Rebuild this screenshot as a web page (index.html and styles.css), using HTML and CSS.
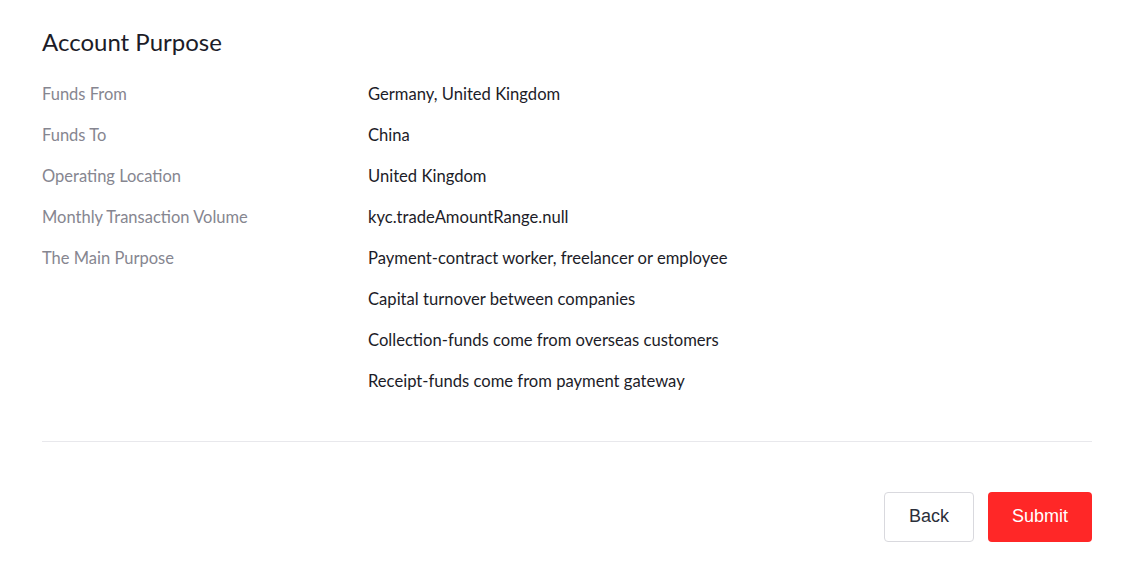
FILE: index.html
```html
<!DOCTYPE html>
<html lang="en">
<head>
    <meta charset="UTF-8">
    <meta name="viewport" content="width=device-width, initial-scale=1.0">
    <title>Account Purpose</title>
    <link rel="stylesheet" href="styles.css">
</head>
<body>
    <div class="pagina">
        <h2 class="titulo">Account Purpose</h2>

        <div class="detalles">
            <div class="fila">
                <div class="etiqueta">Funds From</div>
                <div class="valor">Germany, United Kingdom</div>
            </div>
            <div class="fila">
                <div class="etiqueta">Funds To</div>
                <div class="valor">China</div>
            </div>
            <div class="fila">
                <div class="etiqueta">Operating Location</div>
                <div class="valor">United Kingdom</div>
            </div>
            <div class="fila">
                <div class="etiqueta">Monthly Transaction Volume</div>
                <div class="valor">kyc.tradeAmountRange.null</div>
            </div>
            <div class="fila">
                <div class="etiqueta">The Main Purpose</div>
                <div class="valor lista">
                    <div>Payment-contract worker, freelancer or employee</div>
                    <div>Capital turnover between companies</div>
                    <div>Collection-funds come from overseas customers</div>
                    <div>Receipt-funds come from payment gateway</div>
                </div>
            </div>
        </div>

        <div class="acciones">
            <button class="btn btn-back">Back</button>
            <button class="btn btn-submit">Submit</button>
        </div>
    </div>
</body>
</html>
```

FILE: styles.css
```css
body {
    margin: 0;
    background-color: #ffffff;
    font-family: Lato, "Noto Sans", sans-serif;
}

.pagina {
    padding: 27px 32px 20px 42px;
}

.titulo {
    margin: 0;
    font-size: 24px;
    font-weight: 400;
    line-height: 30px;
    color: #1c1c28;
}

.detalles {
    margin-top: 17px;
    padding-bottom: 39px;
    border-bottom: 1px solid #e8e8ec;
}

.fila {
    display: flex;
}

.etiqueta {
    width: 326px;
    font-size: 16.5px;
    line-height: 41px;
    color: #868690;
}

.valor {
    font-size: 16.6px;
    line-height: 41px;
    color: #1c1c28;
}

.acciones {
    display: flex;
    justify-content: flex-end;
    gap: 14px;
    margin-top: 50px;
}

.btn {
    height: 50px;
    padding-bottom: 3px;
    font-family: "Liberation Sans", Arial, sans-serif;
    font-size: 18px;
    border-radius: 4px;
    cursor: pointer;
}

.btn-back {
    width: 90px;
    background-color: #ffffff;
    color: #2b2f3a;
    border: 1px solid #d9d9de;
}

.btn-submit {
    width: 104px;
    background-color: #ff2727;
    color: #ffffff;
    border: none;
}
```
